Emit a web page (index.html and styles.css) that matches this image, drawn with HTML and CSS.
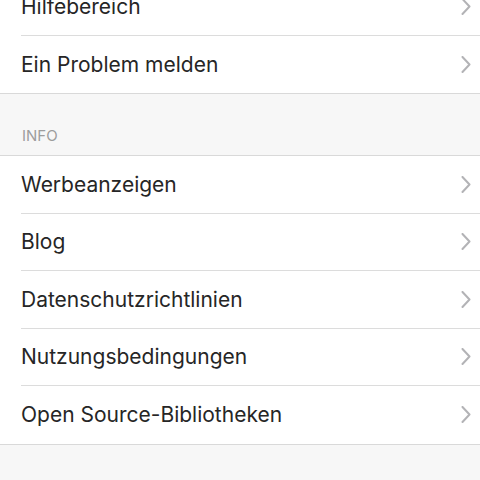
FILE: index.html
```html
<!DOCTYPE html>
<html lang="de">
<head>
<meta charset="utf-8">
<link rel="stylesheet" href="styles.css">
</head>
<body>
<div class="page">
  <ul class="group group-top">
    <li class="row"><span class="label">Hilfebereich</span><svg class="chev" viewBox="0 0 10 17"><path d="M1.5 1 L8.5 8.5 L1.5 16"/></svg></li>
    <li class="row"><span class="label">Ein Problem melden</span><svg class="chev" viewBox="0 0 10 17"><path d="M1.5 1 L8.5 8.5 L1.5 16"/></svg></li>
  </ul>
  <div class="section-head">INFO</div>
  <ul class="group">
    <li class="row"><span class="label">Werbeanzeigen</span><svg class="chev" viewBox="0 0 10 17"><path d="M1.5 1 L8.5 8.5 L1.5 16"/></svg></li>
    <li class="row"><span class="label">Blog</span><svg class="chev" viewBox="0 0 10 17"><path d="M1.5 1 L8.5 8.5 L1.5 16"/></svg></li>
    <li class="row"><span class="label">Datenschutzrichtlinien</span><svg class="chev" viewBox="0 0 10 17"><path d="M1.5 1 L8.5 8.5 L1.5 16"/></svg></li>
    <li class="row"><span class="label">Nutzungsbedingungen</span><svg class="chev" viewBox="0 0 10 17"><path d="M1.5 1 L8.5 8.5 L1.5 16"/></svg></li>
    <li class="row"><span class="label">Open Source-Bibliotheken</span><svg class="chev" viewBox="0 0 10 17"><path d="M1.5 1 L8.5 8.5 L1.5 16"/></svg></li>
  </ul>
</div>
</body>
</html>
```
FILE: styles.css
```css
html, body {
  margin: 0;
  padding: 0;
  background: #f7f7f7;
  font-family: Inter, "Noto Sans", sans-serif;
  overflow: hidden;
}
.page {
  display: flex;
  flex-direction: column;
  height: 480px;
}
.group {
  list-style: none;
  margin: 0;
  padding: 0 0 0 21px;
  background: #ffffff;
  border-bottom: 1px solid #d9d9d9;
}
.group-top {
  margin-top: -22px;
}
.row {
  display: flex;
  align-items: center;
  justify-content: space-between;
  height: 57.5px;
  box-sizing: border-box;
  padding-right: 9px;
  border-bottom: 1px solid #dcdcdc;
  font-size: 21px;
  color: #262626;
}
.row:last-child {
  border-bottom: none;
}
.chev {
  width: 10px;
  height: 17px;
  fill: none;
  stroke: #b3b3b6;
  stroke-width: 2;
  stroke-linecap: round;
  stroke-linejoin: round;
}
.section-head {
  height: 62px;
  box-sizing: border-box;
  padding: 32px 0 0 22px;
  font-size: 15px;
  color: #9d9d9d;
  border-bottom: 1px solid #d9d9d9;
}
```
